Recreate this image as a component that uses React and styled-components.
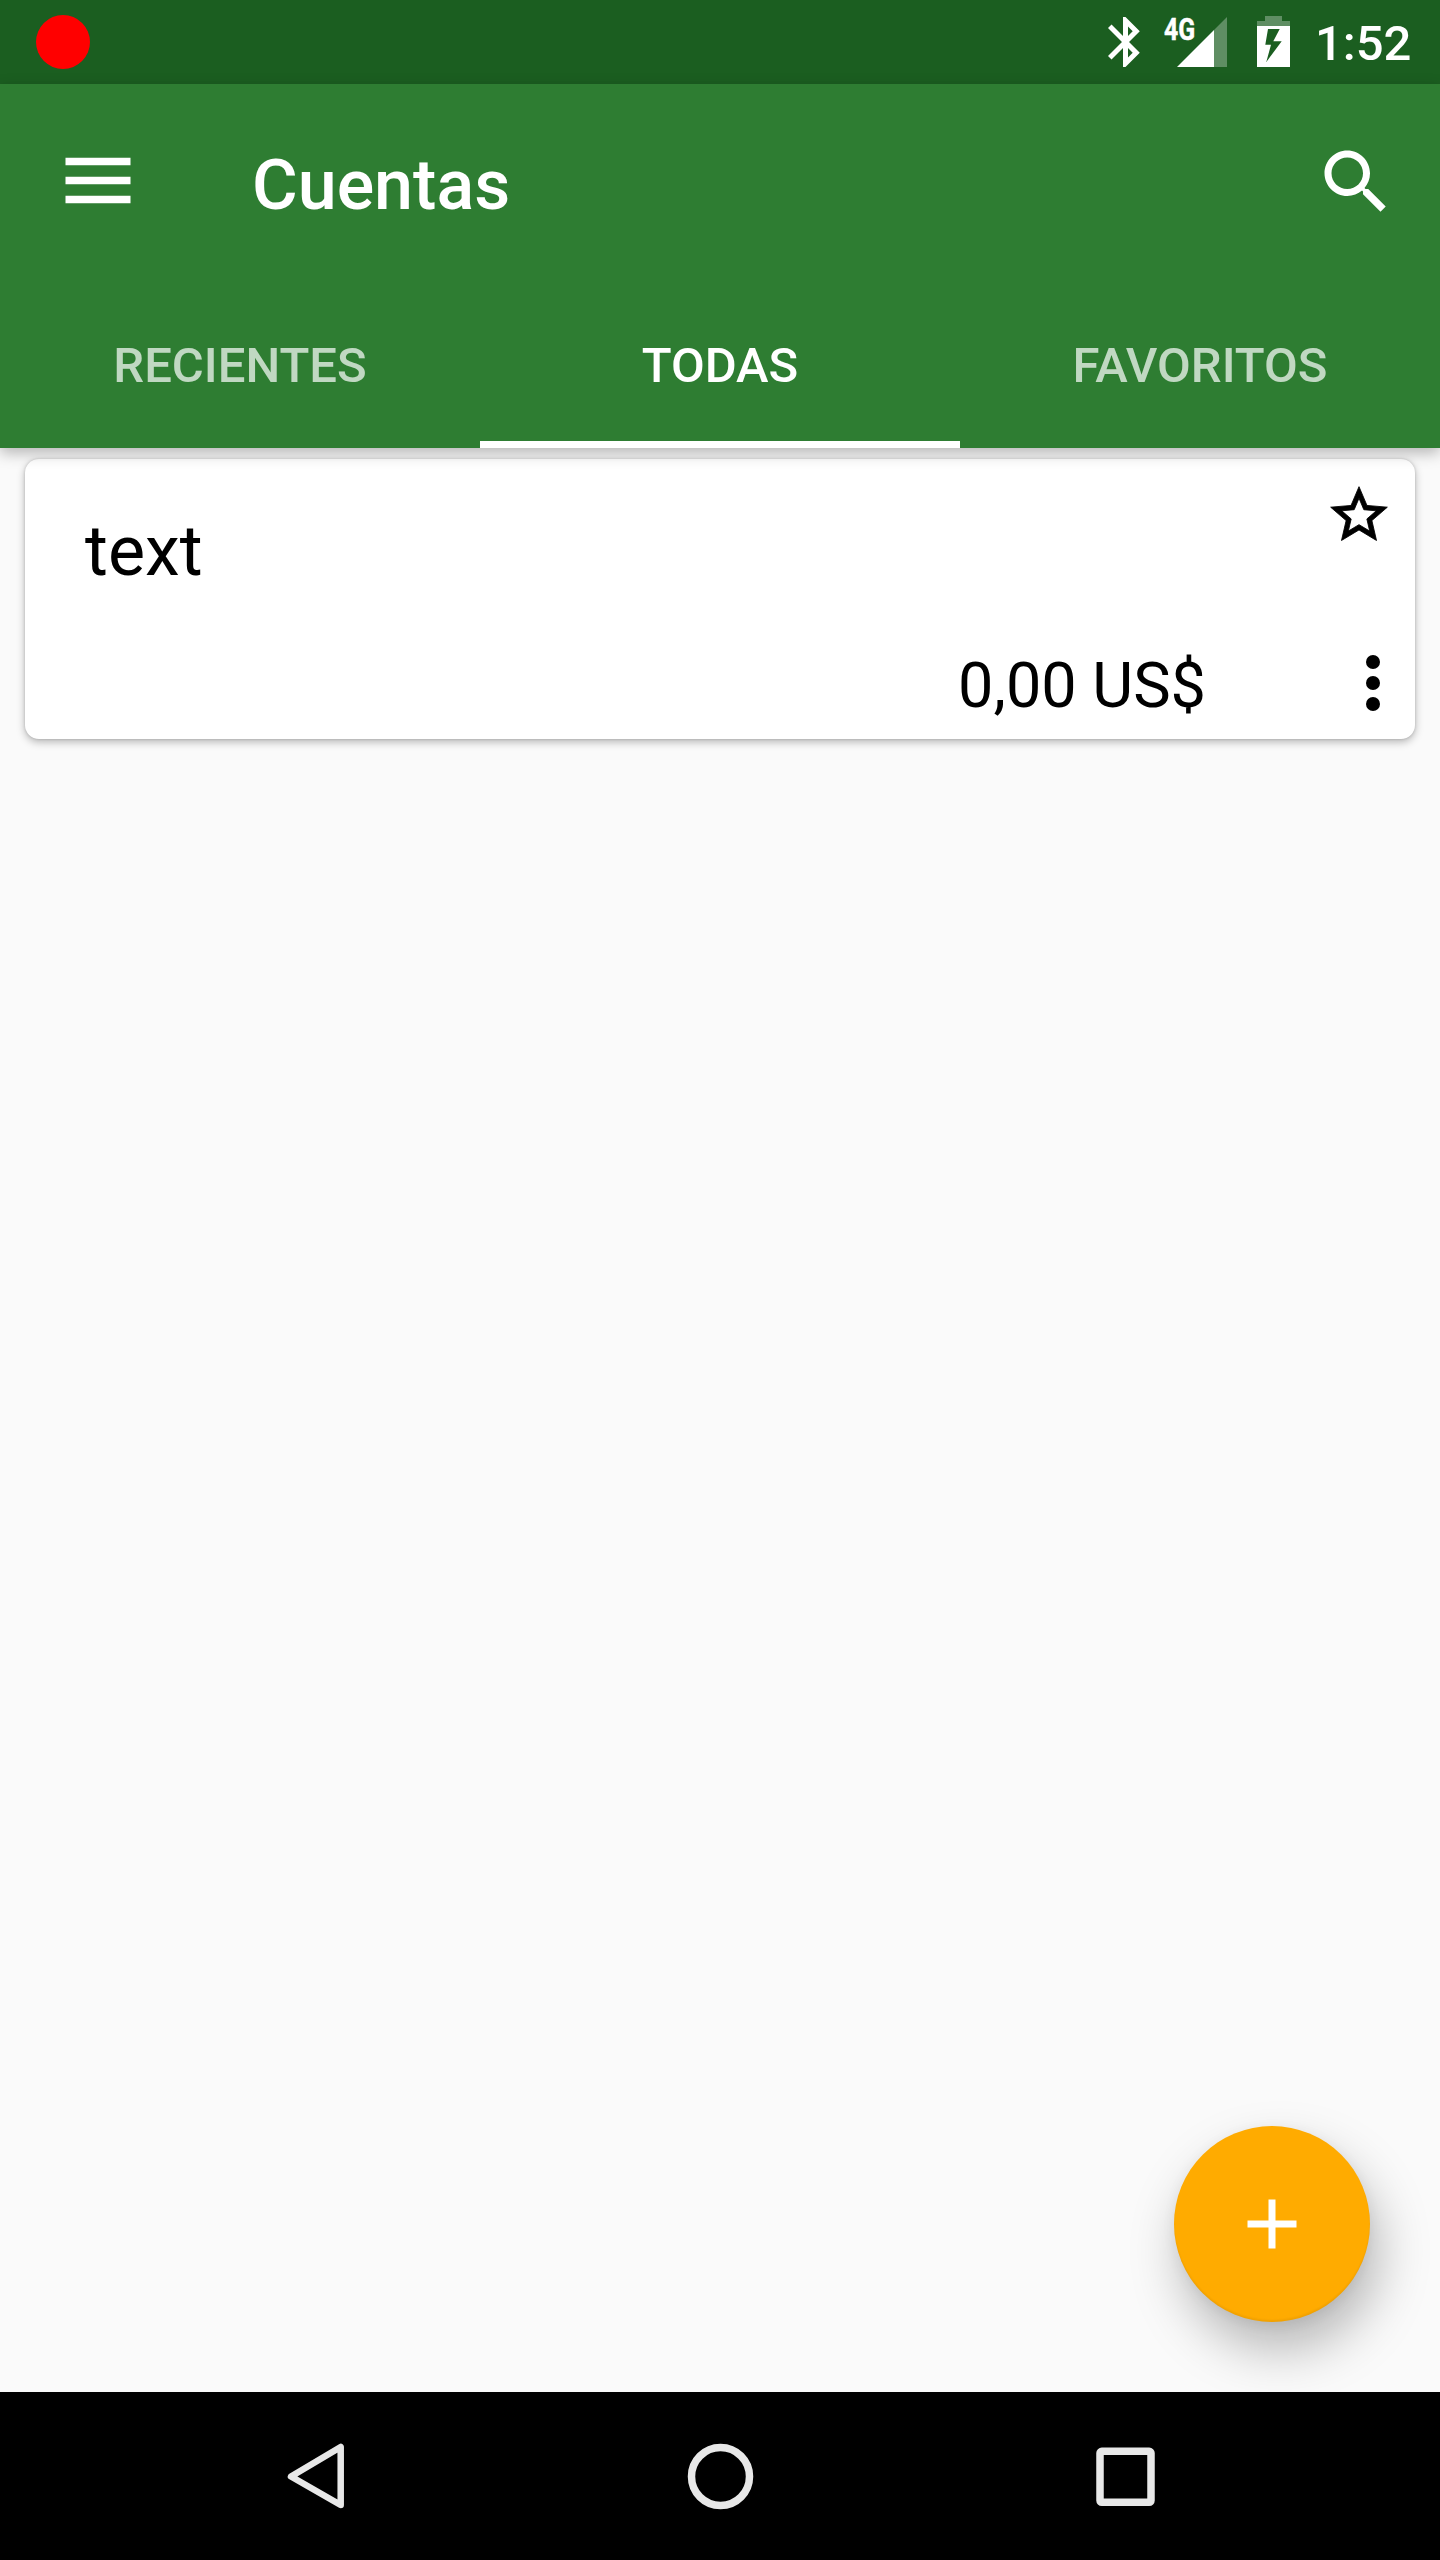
import React from 'react';
import styled, { createGlobalStyle } from 'styled-components';

const GlobalStyle = createGlobalStyle`
  * { box-sizing: border-box; }
  body { margin: 0; background: #fafafa; font-family: Roboto, "Noto Sans", sans-serif; }
  svg { display: block; flex: none; }
`;

const Screen = styled.div`
  position: relative;
  display: flex;
  flex-direction: column;
  width: 1440px;
  height: 2560px;
  overflow: hidden;
  background: #fafafa;
`;

const StatusBar = styled.header`
  display: flex;
  align-items: center;
  justify-content: space-between;
  height: 84px;
  padding: 0 29px 0 36px;
  background: #1b5e20;
  color: #fff;
`;

const RecordDot = styled.span`
  width: 54px;
  height: 54px;
  border-radius: 50%;
  background: #f00;
`;

const StatusIcons = styled.div`
  display: flex;
  align-items: center;
`;

const Signal = styled.div`
  display: flex;
  align-items: flex-start;
  width: 63px;
  margin: 0 30px 0 24px;
`;

const NetworkType = styled.span`
  width: 13px;
  font-size: 31px;
  font-weight: 700;
  line-height: 26px;
  white-space: nowrap;
  -webkit-text-stroke: 0.5px #fff;
  transform: scaleX(0.8);
  transform-origin: left;
`;

const Clock = styled.time`
  width: 96px;
  margin-left: 25px;
  font-size: 49px;
  font-weight: 500;
  line-height: 58px;
  padding-top: 3px;
  white-space: nowrap;
`;

const AppBar = styled.div`
  position: relative;
  z-index: 1;
  height: 364px;
  background: #2e7d32;
  color: #fff;
  box-shadow: 0 5px 14px rgba(0, 0, 0, 0.28);
`;

const Toolbar = styled.div`
  display: flex;
  align-items: center;
  height: 196px;
  padding: 0 42px 0 56px;
`;

const Title = styled.h1`
  flex: 1;
  margin: 0;
  padding: 6px 0 0 112px;
  font-size: 70px;
  font-weight: 500;
  line-height: 82px;
`;

const Tabs = styled.nav`
  display: grid;
  grid-template-columns: repeat(3, 1fr);
  height: 168px;
`;

const Tab = styled.div`
  display: flex;
  align-items: center;
  justify-content: center;
  padding-top: 9px;
  border-bottom: 7px solid ${({ $active }) => ($active ? '#fff' : 'transparent')};
  color: ${({ $active }) => ($active ? '#fff' : 'rgba(255, 255, 255, 0.7)')};
  font-size: 49px;
  font-weight: 500;
`;

const Content = styled.main`
  flex: 1;
  padding: 11px 25px;
`;

const Card = styled.article`
  display: flex;
  flex-direction: column;
  justify-content: space-between;
  height: 280px;
  border-radius: 14px;
  background: #fff;
  color: #000;
  box-shadow: 0 3px 8px rgba(0, 0, 0, 0.28), 0 0 3px rgba(0, 0, 0, 0.16);
`;

const CardHeader = styled.div`
  display: flex;
  align-items: flex-start;
  justify-content: space-between;
  padding: 22px 22px 0 60px;
`;

const AccountName = styled.h2`
  margin: 0;
  padding-top: 29px;
  font-size: 70px;
  font-weight: 400;
  line-height: 82px;
`;

const CardFooter = styled.div`
  display: flex;
  align-items: center;
  justify-content: flex-end;
  padding-bottom: 14px;
`;

const Balance = styled.span`
  padding-top: 5px;
  margin-right: 125px;
  font-size: 63px;
  line-height: 74px;
`;

const Fab = styled.button`
  position: absolute;
  right: 70px;
  bottom: 238px;
  display: flex;
  align-items: center;
  justify-content: center;
  width: 196px;
  height: 196px;
  padding: 0;
  border: 0;
  border-radius: 50%;
  background: #ffab00;
  box-shadow: 8px 27px 52px rgba(0, 0, 0, 0.28), 0 3px 14px rgba(0, 0, 0, 0.06), inset 0 -2px 2px rgba(0, 0, 0, 0.06);
`;

const NavBar = styled.footer`
  display: grid;
  grid-template-columns: repeat(3, 405px);
  justify-content: center;
  align-items: center;
  justify-items: center;
  height: 168px;
  background: #000;
`;

const Icon = ({ size = 84, children, ...rest }) => (
  <svg width={size} height={size} viewBox="0 0 24 24" fill="currentColor" {...rest}>{children}</svg>
);

export default function App() {
  return (
    <>
      <GlobalStyle />
      <Screen>
        <StatusBar>
          <RecordDot />
          <StatusIcons>
            <svg width="32" height="50" viewBox="5 2 12.8 20" fill="#fff">
              <path d="M17.71 7.71L12 2h-1v7.59L6.41 5 5 6.41 10.59 12 5 17.59 6.41 19 11 14.41V22h1l5.71-5.71-4.3-4.29 4.3-4.29zM13 5.83l1.88 1.88L13 9.59V5.83zm1.88 10.46L13 18.17v-3.76l1.88 1.88z" />
            </svg>
            <Signal>
              <NetworkType>4G</NetworkType>
              <svg width="50" height="50" viewBox="0 0 50 50" fill="#fff">
                <path d="M37 13 50 0V50H37Z" opacity=".3" />
                <path d="M0 50 37 13V50Z" />
              </svg>
            </Signal>
            <svg width="33" height="52" viewBox="0 0 33 52" fill="#fff">
              <path d="M0 10V5H8V0H25V5H33V10Z" opacity=".3" />
              <path fillRule="evenodd" d="M0 10H33V51H0ZM11 13 8.3 28.7H14L9.3 46 24.7 25.3H16.3L22.7 13Z" />
            </svg>
            <Clock>1:52</Clock>
          </StatusIcons>
        </StatusBar>

        <AppBar>
          <Toolbar>
            <svg width="84" height="84" viewBox="0 0 84 84" fill="#fff">
              <path d="M9.5 17.8h65v7.4h-65zM9.5 36.8h65v7.4h-65zM9.5 55.8h65v7.4h-65z" />
            </svg>
            <Title>Cuentas</Title>
            <Icon>
              <path d="M15.5 14h-.79l-.28-.27C15.41 12.59 16 11.11 16 9.5 16 5.91 13.09 3 9.5 3S3 5.91 3 9.5 5.91 16 9.5 16c1.61 0 3.09-.59 4.23-1.57l.27.28v.79l5 4.99L20.49 19l-4.99-5zm-6 0C7.01 14 5 11.99 5 9.5S7.01 5 9.5 5 14 7.01 14 9.5 11.99 14 9.5 14z" />
            </Icon>
          </Toolbar>
          <Tabs>
            <Tab>RECIENTES</Tab>
            <Tab $active>TODAS</Tab>
            <Tab>FAVORITOS</Tab>
          </Tabs>
        </AppBar>

        <Content>
          <Card>
            <CardHeader>
              <AccountName>text</AccountName>
              <Icon size={68} stroke="currentColor" strokeWidth=".3">
                <path d="M22 9.24l-7.19-.62L12 2 9.19 8.63 2 9.24l5.46 4.73L5.82 21 12 17.27 18.18 21l-1.63-7.03L22 9.24zM12 15.4l-3.76 2.27 1-4.28-3.32-2.88 4.38-.38L12 6.1l1.71 4.04 4.38.38-3.32 2.88 1 4.28L12 15.4z" />
              </Icon>
            </CardHeader>
            <CardFooter>
              <Balance>0,00 US$</Balance>
              <Icon>
                <circle cx="12" cy="6" r="2" />
                <circle cx="12" cy="12" r="2" />
                <circle cx="12" cy="18" r="2" />
              </Icon>
            </CardFooter>
          </Card>
        </Content>

        <NavBar>
          <svg width="84" height="84" viewBox="0 0 84 84" fill="none" stroke="#e8e8e8" strokeWidth="6.5" strokeLinejoin="round">
            <path d="M67.7 13V71L18 42.5Z" />
          </svg>
          <svg width="84" height="84" viewBox="0 0 84 84" fill="none" stroke="#e8e8e8" strokeWidth="7.5">
            <circle cx="42.5" cy="42.5" r="29" />
          </svg>
          <svg width="84" height="84" viewBox="0 0 84 84" fill="none" stroke="#e8e8e8" strokeWidth="7.5">
            <rect x="17" y="17.3" width="51" height="51" rx="1.8" />
          </svg>
        </NavBar>

        <Fab aria-label="+">
          <svg width="84" height="84" viewBox="0 0 24 24" fill="#fff">
            <path d="M19 13h-6v6h-2v-6H5v-2h6V5h2v6h6v2z" />
          </svg>
        </Fab>
      </Screen>
    </>
  );
}
